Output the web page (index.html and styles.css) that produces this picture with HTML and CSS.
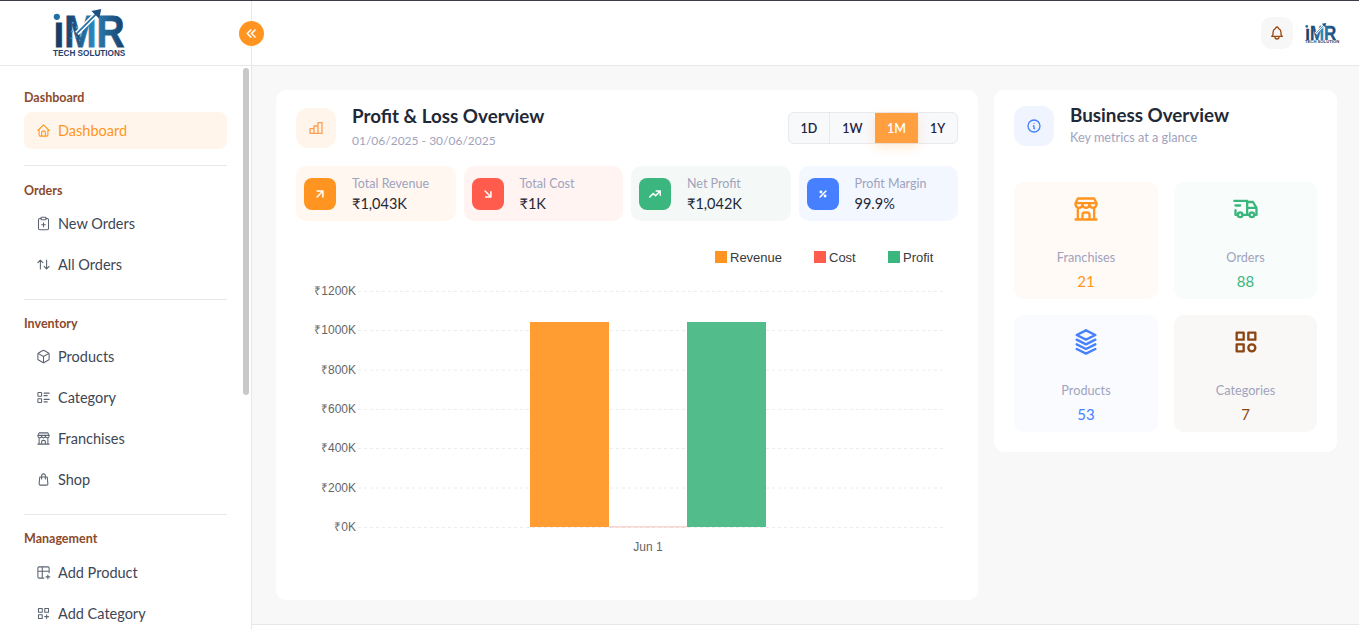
FILE: index.html
```html
<!DOCTYPE html>
<html lang="en">
<head>
    <meta charset="UTF-8">
    <meta name="viewport" content="width=device-width, initial-scale=1.0">
    <title>IMR Tech Solutions - Dashboard</title>
    <link rel="stylesheet" href="styles.css">
</head>
<body>

    <!-- shared gradient + logo mark, used in the sidebar and the top bar -->
    <svg class="sprite" width="0" height="0">
        <defs>
            <linearGradient id="logo-grad" x1="0" y1="0" x2="1" y2="0">
                <stop offset="0" stop-color="#14365f"/>
                <stop offset="0.3" stop-color="#1f4f80"/>
                <stop offset="0.55" stop-color="#2b86b8"/>
                <stop offset="1" stop-color="#183f6b"/>
            </linearGradient>
            <symbol id="logo-mark" viewBox="0 0 74 40">
                <circle cx="3.5" cy="8" r="3.2" fill="#1d6fa5"/>
                <text x="0" y="39" class="logo-letters" textLength="73" lengthAdjust="spacingAndGlyphs" fill="url(#logo-grad)" stroke="url(#logo-grad)" stroke-width="0.8">ıMR</text>
                <path d="M24 25L46 3" stroke="#fff" stroke-width="5"/>
                <path d="M24 25L45 4" stroke="#2a6fa3" stroke-width="1.8"/>
                <path d="M49 0L39 2L47 10Z" fill="#1d4f80"/>
                <g fill="#4a9ccb">
                    <circle cx="20" cy="14" r="1"/><circle cx="24" cy="19" r="1.2"/><circle cx="19" cy="23" r="1"/>
                    <circle cx="23" cy="29" r="1"/><circle cx="28" cy="26" r="1"/><circle cx="18" cy="30" r="0.8"/>
                    <circle cx="27" cy="32" r="0.8"/>
                </g>
            </symbol>
        </defs>
    </svg>

    <div class="app">
        <aside class="sidebar">
            <div class="brand">
                <div class="brand-logo">
                    <svg class="brand-mark"><use href="#logo-mark"/></svg>
                    <span class="brand-name">TECH SOLUTIONS</span>
                </div>
            </div>
            <div class="side-scroll"></div>
            <nav class="side-nav">
                <div class="nav-section">
                    <h4>Dashboard</h4>
                    <a href="#" class="nav-item active">
                        <svg class="ico" viewBox="0 0 24 24"><path d="M5 12H3l9-9 9 9h-2M5 12v7a2 2 0 0 0 2 2h10a2 2 0 0 0 2-2v-7M9 21v-6a2 2 0 0 1 2-2h2a2 2 0 0 1 2 2v6"/></svg>
                        Dashboard
                    </a>
                </div>
                <div class="nav-section">
                    <h4>Orders</h4>
                    <a href="#" class="nav-item">
                        <svg class="ico" viewBox="0 0 24 24"><rect x="8" y="2" width="8" height="4" rx="1"/><path d="M16 4h2a2 2 0 0 1 2 2v14a2 2 0 0 1-2 2H6a2 2 0 0 1-2-2V6a2 2 0 0 1 2-2h2M9 14h6M12 17v-6"/></svg>
                        New Orders
                    </a>
                    <a href="#" class="nav-item">
                        <svg class="ico" viewBox="0 0 24 24"><path d="M3 9l4-4 4 4M7 5v14M21 15l-4 4-4-4M17 19V5"/></svg>
                        All Orders
                    </a>
                </div>
                <div class="nav-section">
                    <h4>Inventory</h4>
                    <a href="#" class="nav-item">
                        <svg class="ico" viewBox="0 0 24 24"><path d="M21 8a2 2 0 0 0-1-1.73l-7-4a2 2 0 0 0-2 0l-7 4A2 2 0 0 0 3 8v8a2 2 0 0 0 1 1.73l7 4a2 2 0 0 0 2 0l7-4A2 2 0 0 0 21 16ZM3.3 7l8.7 5 8.7-5M12 22V12"/></svg>
                        Products
                    </a>
                    <a href="#" class="nav-item">
                        <svg class="ico" viewBox="0 0 24 24"><path d="M13 5h8M13 9h5M13 15h8M13 19h5"/><rect x="3" y="4" width="6" height="6" rx="1"/><rect x="3" y="14" width="6" height="6" rx="1"/></svg>
                        Category
                    </a>
                    <a href="#" class="nav-item">
                        <svg class="ico" viewBox="0 0 24 24"><path d="M3 21h18M3 7v1a3 3 0 0 0 6 0V7m0 1a3 3 0 0 0 6 0V7m0 1a3 3 0 0 0 6 0V7H3l2-4h14l2 4M5 21V10.85M19 21V10.85M9 21v-4a2 2 0 0 1 2-2h2a2 2 0 0 1 2 2v4"/></svg>
                        Franchises
                    </a>
                    <a href="#" class="nav-item">
                        <svg class="ico" viewBox="0 0 24 24"><path d="M6 8h12l1 11a2 2 0 0 1-2 2H7a2 2 0 0 1-2-2zM9 11V6a3 3 0 0 1 6 0v5"/></svg>
                        Shop
                    </a>
                </div>
                <div class="nav-section nav-last">
                    <h4>Management</h4>
                    <a href="#" class="nav-item">
                        <svg class="ico" viewBox="0 0 24 24"><path d="M12.5 21H5a2 2 0 0 1-2-2V5a2 2 0 0 1 2-2h14a2 2 0 0 1 2 2v7.5M3 10h18M10 3v18M16 19h6M19 16v6"/></svg>
                        Add Product
                    </a>
                    <a href="#" class="nav-item">
                        <svg class="ico" viewBox="0 0 24 24"><path d="M4 4h6v6H4zM14 4h6v6h-6zM4 14h6v6H4zM14 17h6M17 14v6"/></svg>
                        Add Category
                    </a>
                </div>
            </nav>
        </aside>

        <button class="collapse-btn" aria-label="Collapse sidebar">
            <svg viewBox="0 0 24 24"><path d="M11 7l-5 5 5 5M17 7l-5 5 5 5"/></svg>
        </button>

        <div class="page">
            <header class="topbar">
                <button class="bell-btn" aria-label="Notifications">
                    <svg viewBox="0 0 24 24"><path d="M10 5a2 2 0 1 1 4 0 7 7 0 0 1 4 6v3a4 4 0 0 0 2 3H4a4 4 0 0 0 2-3v-3a7 7 0 0 1 4-6M9 17v1a3 3 0 0 0 6 0v-1"/></svg>
                </button>
                <div class="mini-logo">
                    <svg class="mini-mark"><use href="#logo-mark"/></svg>
                    <span>TECH SOLUTION</span>
                </div>
            </header>

            <main class="content">
                <section class="card pl-card">
                    <div class="pl-head">
                        <div class="head-icon tint-orange">
                            <svg class="ico" viewBox="0 0 24 24"><path d="M3 13h6v7H3zM9 9h6v11H9zM15 4h6v16h-6z"/></svg>
                        </div>
                        <div class="head-text">
                            <h2>Profit &amp; Loss Overview</h2>
                            <p class="date-range">01/06/2025 - 30/06/2025</p>
                        </div>
                        <div class="range-tabs">
                            <button class="tab tab-d">1D</button>
                            <button class="tab tab-w">1W</button>
                            <button class="tab tab-m active">1M</button>
                            <button class="tab tab-y">1Y</button>
                        </div>
                    </div>

                    <div class="stats">
                        <div class="stat stat-orange">
                            <div class="stat-icon"><svg viewBox="0 0 24 24"><path d="M7 7h10v10M7 17L17 7"/></svg></div>
                            <div class="stat-text"><p class="stat-label">Total Revenue</p><p class="stat-value">₹1,043K</p></div>
                        </div>
                        <div class="stat stat-red">
                            <div class="stat-icon"><svg viewBox="0 0 24 24"><path d="M7 7l10 10M17 8v9H8"/></svg></div>
                            <div class="stat-text"><p class="stat-label">Total Cost</p><p class="stat-value">₹1K</p></div>
                        </div>
                        <div class="stat stat-green">
                            <div class="stat-icon"><svg viewBox="0 0 24 24"><path d="M3 17l6-6 4 4 8-8M14 7h7v7"/></svg></div>
                            <div class="stat-text"><p class="stat-label">Net Profit</p><p class="stat-value">₹1,042K</p></div>
                        </div>
                        <div class="stat stat-blue">
                            <div class="stat-icon"><svg viewBox="0 0 24 24"><circle cx="8.5" cy="8.5" r="1.2"/><circle cx="15.5" cy="15.5" r="1.2"/><path d="M17 7L7 17"/></svg></div>
                            <div class="stat-text"><p class="stat-label">Profit Margin</p><p class="stat-value">99.9%</p></div>
                        </div>
                    </div>

                    <!-- chart: coordinates are relative to the card's inner box -->
                    <svg class="chart" width="662" height="340" viewBox="0 0 662 340">
                        <g class="legend">
                            <rect x="419" y="18" width="12" height="12" fill="#ff9520"/><text x="434" y="29">Revenue</text>
                            <rect x="518" y="18" width="12" height="12" fill="#ff5c4d"/><text x="533" y="29">Cost</text>
                            <rect x="592" y="18" width="12" height="12" fill="#3cb67f"/><text x="607" y="29">Profit</text>
                        </g>
                        <g class="grid">
                            <path d="M62 58.5H647M62 97.5H647M62 137H647M62 176.5H647M62 215.5H647M62 255H647M62 294.5H647"/>
                        </g>
                        <g class="ticks">
                            <text x="60" y="62">₹1200K</text>
                            <text x="60" y="101">₹1000K</text>
                            <text x="60" y="141">₹800K</text>
                            <text x="60" y="180">₹600K</text>
                            <text x="60" y="219">₹400K</text>
                            <text x="60" y="259">₹200K</text>
                            <text x="60" y="298">₹0K</text>
                        </g>
                        <rect x="234" y="89" width="79" height="205" fill="#ff9d32"/>
                        <rect x="313" y="293.5" width="78" height="0.8" fill="#f4b0a8"/>
                        <rect x="391" y="89" width="79" height="205" fill="#52bd8b"/>
                        <text class="x-label" x="352" y="318">Jun 1</text>
                    </svg>
                </section>

                <section class="card biz-card">
                    <div class="biz-head">
                        <div class="head-icon tint-blue">
                            <svg class="ico" viewBox="0 0 24 24"><circle cx="12" cy="12" r="9"/><path d="M12 8h.01M11 12h1v4h1"/></svg>
                        </div>
                        <div class="head-text">
                            <h2>Business Overview</h2>
                            <p class="sub">Key metrics at a glance</p>
                        </div>
                    </div>
                    <div class="tiles">
                        <div class="tile tile-orange">
                            <svg viewBox="0 0 24 24"><path d="M3 21h18M3 7v1a3 3 0 0 0 6 0V7m0 1a3 3 0 0 0 6 0V7m0 1a3 3 0 0 0 6 0V7H3l2-4h14l2 4M5 21V10.85M19 21V10.85M9 21v-4a2 2 0 0 1 2-2h2a2 2 0 0 1 2 2v4"/></svg>
                            <p class="tile-label">Franchises</p>
                            <p class="tile-value">21</p>
                        </div>
                        <div class="tile tile-green">
                            <svg viewBox="0 0 24 24"><circle cx="7" cy="17" r="2"/><circle cx="17" cy="17" r="2"/><path d="M5 17H3v-4M2 5h11v12m-4 0h6m4 0h2v-6h-8m0-5h5l3 5M3 9h4"/></svg>
                            <p class="tile-label">Orders</p>
                            <p class="tile-value">88</p>
                        </div>
                        <div class="tile tile-blue">
                            <svg viewBox="0 0 24 24"><path d="M12 2L4 6l8 4 8-4-8-4M4 10l8 4 8-4M4 18l8 4 8-4M4 14l8 4 8-4"/></svg>
                            <p class="tile-label">Products</p>
                            <p class="tile-value">53</p>
                        </div>
                        <div class="tile tile-brown">
                            <svg viewBox="0 0 24 24"><path d="M4 4h6v6H4zM14 4h6v6h-6zM4 14h6v6H4z"/><circle cx="17" cy="17" r="3"/></svg>
                            <p class="tile-label">Categories</p>
                            <p class="tile-value">7</p>
                        </div>
                    </div>
                </section>
            </main>

            <footer class="page-foot"></footer>
        </div>
    </div>

</body>
</html>
```

FILE: styles.css
```css
* {
    box-sizing: border-box;
}

html, body {
    height: 100%;
}

body {
    margin: 0;
    font-family: "Lato", "Noto Sans", Arial, sans-serif;
    background-color: #f8f8f8;
    color: #1f2937;
    overflow: hidden;
    border-top: 1px solid #3c3c46;
}

h2, h4, p {
    margin: 0;
}

.sprite {
    position: absolute;
}

.logo-letters {
    font-family: "Liberation Sans", Arial, sans-serif;
    font-weight: 700;
    font-size: 46px;
}

.app {
    display: flex;
    height: 100%;
    position: relative;
}

/* sidebar */
.sidebar {
    width: 252px;
    flex-shrink: 0;
    background-color: #fff;
    border-right: 1px solid #e8e8e8;
    position: relative;
    overflow: hidden;
}

.brand {
    height: 65px;
    border-bottom: 1px solid #e8e8e8;
    padding: 8px 0 0 53px;
}

.brand-logo {
    width: 73px;
    display: flex;
    flex-direction: column;
}

.brand-mark {
    width: 73px;
    height: 39px;
}

.brand-name {
    font-family: "Liberation Sans", Arial, sans-serif;
    font-size: 8.2px;
    line-height: 10px;
    font-weight: 700;
    color: #24406a;
    white-space: nowrap;
    margin-top: 1px;
}

.side-scroll {
    position: absolute;
    top: 67px;
    left: 243px;
    width: 6px;
    height: 327px;
    border-radius: 3px;
    background-color: #c8c8c8;
}

.side-nav {
    padding: 22px 24px 0;
}

.nav-section {
    padding-bottom: 16px;
    border-bottom: 1px solid #e8e8ec;
    margin-bottom: 14px;
}

.nav-section:first-child {
    margin-bottom: 15px;
}

.nav-section h4 {
    font-size: 12.5px;
    line-height: 20px;
    font-weight: 700;
    color: #8b4a2b;
    margin-bottom: 4px;
}

.nav-last h4 {
    margin-bottom: 5px;
}

.nav-item {
    display: flex;
    align-items: center;
    gap: 7.5px;
    height: 37px;
    padding: 0 0 1px 11.5px;
    margin-bottom: 4px;
    border-radius: 8px;
    font-size: 14.5px;
    color: #3d4654;
    text-decoration: none;
}

.nav-item:last-child {
    margin-bottom: 0;
}

.nav-item .ico {
    width: 15px;
    height: 15px;
    color: #5c6470;
    stroke-width: 1.7;
}

.nav-item.active {
    background-color: #fff5eb;
    color: #ff9520;
}

.nav-item.active .ico {
    color: #ff9520;
}

.ico {
    width: 16px;
    height: 16px;
    flex-shrink: 0;
    fill: none;
    stroke: currentColor;
    stroke-width: 2;
    stroke-linecap: round;
    stroke-linejoin: round;
}

.collapse-btn {
    position: absolute;
    top: 20px;
    left: 239px;
    width: 25px;
    height: 25px;
    padding: 4px;
    border: none;
    border-radius: 50%;
    background-color: #ff9520;
    z-index: 2;
}

.collapse-btn svg {
    display: block;
    fill: none;
    stroke: #fff;
    stroke-width: 2.2;
    stroke-linecap: round;
    stroke-linejoin: round;
}

/* page */
.page {
    flex: 1;
    display: flex;
    flex-direction: column;
    min-width: 0;
}

.topbar {
    height: 65px;
    flex-shrink: 0;
    background-color: #fff;
    border-bottom: 1px solid #e8e8e8;
    display: flex;
    align-items: center;
    justify-content: flex-end;
    gap: 12px;
    padding-right: 22px;
}

.bell-btn {
    width: 32px;
    height: 32px;
    padding: 8px;
    border: none;
    border-radius: 10px;
    background-color: #f7f7f7;
}

.bell-btn svg {
    display: block;
    fill: none;
    stroke: #9a4a12;
    stroke-width: 2;
    stroke-linecap: round;
    stroke-linejoin: round;
}

.mini-logo {
    width: 32px;
    display: flex;
    flex-direction: column;
    margin-top: 1px;
}

.mini-mark {
    width: 32px;
    height: 17px;
}

.mini-logo span {
    font-family: "Liberation Sans", Arial, sans-serif;
    font-size: 4.2px;
    line-height: 4px;
    font-weight: 700;
    color: #24406a;
    white-space: nowrap;
}

.content {
    flex: 1;
    display: grid;
    grid-template-columns: 702px 343px;
    gap: 16px;
    align-items: start;
    padding: 24px 0 0 24px;
}

.card {
    background-color: #fff;
    border-radius: 10px;
    padding: 0 20px;
}

.pl-card {
    height: 510px;
    padding-top: 18px;
}

.biz-card {
    height: 362px;
    padding-top: 16px;
}

.pl-head, .biz-head {
    display: flex;
    align-items: flex-start;
    gap: 16px;
}

.head-icon {
    width: 40px;
    height: 40px;
    border-radius: 12px;
    display: flex;
    align-items: center;
    justify-content: center;
    flex-shrink: 0;
}

.tint-orange {
    background-color: #fff5eb;
    color: #ff9d50;
}

.tint-blue {
    background-color: #eff4ff;
    color: #4680ff;
}

.head-text {
    flex: 1;
}

.head-text h2 {
    font-size: 18.8px;
    line-height: 20px;
    font-weight: 700;
    color: #1f2937;
}

.pl-head h2 {
    margin-top: -2px;
}

.biz-head h2 {
    margin-top: -1px;
}

.date-range {
    font-size: 12px;
    line-height: 18px;
    color: #a0a3bd;
    margin-top: 6px;
}

.sub {
    font-size: 12.7px;
    line-height: 18px;
    color: #a0a3bd;
    margin-top: 3px;
}

.range-tabs {
    display: flex;
    margin-top: 4px;
    height: 32px;
    border: 1px solid #e8e9ee;
    border-radius: 6px;
    background-color: #f8f9fb;
}

.tab {
    border: none;
    background: none;
    padding: 0;
    font-family: inherit;
    font-size: 12.5px;
    font-weight: 600;
    color: #1f2340;
}

.tab-d {
    width: 41px;
    border-right: 1px solid #e8e9ee;
}

.tab-w {
    width: 45px;
}

.tab-m {
    width: 43px;
}

.tab-y {
    width: 39px;
}

.tab.active {
    background-color: #ff9f40;
    color: #fff;
    box-shadow: 0 4px 12px rgba(255, 149, 32, 0.2);
}

.stats {
    display: grid;
    grid-template-columns: repeat(4, 1fr);
    gap: 8px;
    margin-top: 16px;
}

.stat {
    display: flex;
    align-items: center;
    gap: 16px;
    height: 55px;
    padding-left: 8px;
    border-radius: 10px;
}

.stat-icon {
    width: 32px;
    height: 32px;
    padding: 9px;
    border-radius: 8px;
    flex-shrink: 0;
}

.stat-icon svg {
    display: block;
    fill: none;
    stroke: #fff;
    stroke-width: 2.6;
    stroke-linecap: round;
    stroke-linejoin: round;
}

.stat-text {
    padding-top: 2px;
}

.stat-label {
    font-size: 12.5px;
    line-height: 18px;
    color: #a0a3bd;
}

.stat-value {
    font-size: 14.5px;
    line-height: 20px;
    color: #1f2937;
    margin-top: 1px;
}

.stat-orange {
    background-color: #fff7f0;
}

.stat-orange .stat-icon {
    background-color: #ff9520;
}

.stat-red {
    background-color: #fff4f2;
}

.stat-red .stat-icon {
    background-color: #ff5c4d;
}

.stat-green {
    background-color: #f4f9f7;
}

.stat-green .stat-icon {
    background-color: #3cb67f;
}

.stat-blue {
    background-color: #f3f7ff;
}

.stat-blue .stat-icon {
    background-color: #4680ff;
}

.chart {
    display: block;
    margin-top: 12px;
    font-family: "Liberation Sans", Arial, sans-serif;
}

.legend text {
    font-size: 13px;
    fill: #3a3a3a;
}

.grid path {
    fill: none;
    stroke: #ececec;
    stroke-width: 1;
    stroke-dasharray: 3 3;
}

.ticks text {
    font-size: 12px;
    fill: #666;
    text-anchor: end;
}

.x-label {
    font-size: 12px;
    fill: #666;
    text-anchor: middle;
}

.tiles {
    display: grid;
    grid-template-columns: 144px 143px;
    gap: 16.5px 16px;
    margin-top: 36px;
}

.tile {
    height: 116.5px;
    padding-top: 13px;
    border-radius: 10px;
    text-align: center;
}

.tile svg {
    display: block;
    width: 28px;
    height: 28px;
    margin: 0 auto 25px;
    fill: none;
    stroke: currentColor;
    stroke-width: 2;
    stroke-linecap: round;
    stroke-linejoin: round;
}

.tile-label {
    font-size: 12.7px;
    line-height: 18px;
    color: #a0a3bd;
}

.tile-value {
    font-size: 15px;
    line-height: 18px;
    margin-top: 6px;
}

.tile-orange {
    background-color: #fffaf5;
    color: #ff9520;
}

.tile-green {
    background-color: #f8fcfa;
    color: #3cb67f;
}

.tile-blue {
    background-color: #f9fbff;
    color: #4680ff;
}

.tile-brown {
    background-color: #faf8f6;
    color: #8b4513;
}

.page-foot {
    height: 5px;
    flex-shrink: 0;
    background-color: #fff;
    border-top: 1px solid #e8e8e8;
}
```
